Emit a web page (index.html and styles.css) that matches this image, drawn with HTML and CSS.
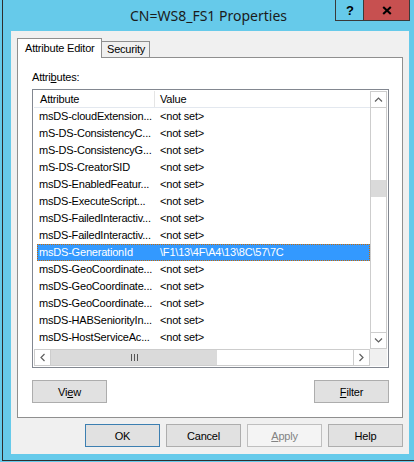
FILE: index.html
```html
<!DOCTYPE html>
<html>
<head>
<meta charset="utf-8">
<title>CN=WS8_FS1 Properties</title>
<link rel="stylesheet" href="styles.css">
</head>
<body>
<div class="window">
  <div class="titlebar">
    <div class="title">CN=WS8_FS1 Properties</div>
    <div class="caption">
      <div class="cap-help">?</div>
      <div class="cap-close">
        <svg width="10" height="9" viewBox="0 0 10 9"><path d="M1.2 1 L8.8 8 M8.8 1 L1.2 8" stroke="#000" stroke-width="2.1" fill="none"/></svg>
      </div>
    </div>
  </div>
  <div class="client">
    <div class="tabs">
      <div class="tab tab-active">Attribute Editor</div>
      <div class="tab tab-inactive">Security</div>
    </div>
    <div class="panel">
      <div class="label">Attri<u>b</u>utes:</div>
      <div class="listbox">
        <div class="rows">
          <div class="header"><div class="h-attr">Attribute</div><div class="h-val">Value</div></div>
          <div class="row"><span class="c1">msDS-cloudExtension...</span><span class="c2">&lt;not set&gt;</span></div>
          <div class="row"><span class="c1">mS-DS-ConsistencyC...</span><span class="c2">&lt;not set&gt;</span></div>
          <div class="row"><span class="c1">mS-DS-ConsistencyG...</span><span class="c2">&lt;not set&gt;</span></div>
          <div class="row"><span class="c1">mS-DS-CreatorSID</span><span class="c2">&lt;not set&gt;</span></div>
          <div class="row"><span class="c1">msDS-EnabledFeatur...</span><span class="c2">&lt;not set&gt;</span></div>
          <div class="row"><span class="c1">msDS-ExecuteScript...</span><span class="c2">&lt;not set&gt;</span></div>
          <div class="row"><span class="c1">msDS-FailedInteractiv...</span><span class="c2">&lt;not set&gt;</span></div>
          <div class="row"><span class="c1">msDS-FailedInteractiv...</span><span class="c2">&lt;not set&gt;</span></div>
          <div class="row sel"><span class="c1">msDS-GenerationId</span><span class="c2">\F1\13\4F\A4\13\8C\57\7C</span></div>
          <div class="row"><span class="c1">msDS-GeoCoordinate...</span><span class="c2">&lt;not set&gt;</span></div>
          <div class="row"><span class="c1">msDS-GeoCoordinate...</span><span class="c2">&lt;not set&gt;</span></div>
          <div class="row"><span class="c1">msDS-GeoCoordinate...</span><span class="c2">&lt;not set&gt;</span></div>
          <div class="row"><span class="c1">msDS-HABSeniorityIn...</span><span class="c2">&lt;not set&gt;</span></div>
          <div class="row"><span class="c1">msDS-HostServiceAc...</span><span class="c2">&lt;not set&gt;</span></div>
        </div>
        <div class="vscroll">
          <div class="sb-btn sb-up"><svg width="9" height="5" viewBox="0 0 9 5"><polyline points="1,4.5 4.5,1 8,4.5" stroke="#606060" stroke-width="1.2" fill="none"/></svg></div>
          <div class="vtrack"><div class="vthumb"></div></div>
          <div class="sb-btn sb-down"><svg width="9" height="5" viewBox="0 0 9 5"><polyline points="1,0.5 4.5,4 8,0.5" stroke="#606060" stroke-width="1.2" fill="none"/></svg></div>
        </div>
        <div class="hscroll">
          <div class="sb-hbtn sb-left"><svg width="5" height="9" viewBox="0 0 5 9"><polyline points="4.5,1 1,4.5 4.5,8" stroke="#606060" stroke-width="1.2" fill="none"/></svg></div>
          <div class="htrack">
            <div class="hthumb"><svg width="7" height="7" viewBox="0 0 7 7"><rect x="0" y="0" width="1" height="7" fill="#555"/><rect x="3" y="0" width="1" height="7" fill="#555"/><rect x="6" y="0" width="1" height="7" fill="#555"/></svg></div>
          </div>
          <div class="sb-hbtn sb-right"><svg width="5" height="9" viewBox="0 0 5 9"><polyline points="0.5,1 4,4.5 0.5,8" stroke="#606060" stroke-width="1.2" fill="none"/></svg></div>
        </div>
        <div class="corner"></div>
      </div>
      <div class="panel-buttons">
        <button class="btn">Vi<u>e</u>w</button>
        <button class="btn"><u>F</u>ilter</button>
      </div>
    </div>
    <div class="dialog-buttons">
      <button class="btn btn-default">OK</button>
      <button class="btn">Cancel</button>
      <button class="btn btn-disabled"><u>A</u>pply</button>
      <button class="btn">Help</button>
    </div>
  </div>
</div>
</body>
</html>
```

FILE: styles.css
```css
* { box-sizing: border-box; }
html, body { margin: 0; padding: 0; }
body {
  width: 414px;
  height: 462px;
  overflow: hidden;
  background: #66caea;
  font-family: "Liberation Sans", Arial, sans-serif;
  font-size: 11px;
  letter-spacing: -0.2px;
  color: #000;
}
.window {
  margin-left: 2px;
  height: 461px;
  border-left: 1px solid #2e2e2e;
  border-bottom: 1px solid #2e2e2e;
  display: flex;
  flex-direction: column;
}
.titlebar {
  height: 31px;
  display: flex;
  align-items: flex-start;
  flex-shrink: 0;
}
.title {
  flex: 1;
  padding-left: 79px;
  text-align: center;
  font-family: "Noto Sans", sans-serif;
  font-size: 14px;
  letter-spacing: 0;
  line-height: 31px;
  color: #1b1b1b;
  white-space: nowrap;
}
.caption {
  display: flex;
  margin-right: 4px;
  height: 21px;
  border: 1px solid #3a3a3a;
  border-top: none;
}
.cap-help {
  width: 28px;
  height: 20px;
  border-right: 1px solid #3a3a3a;
  display: flex;
  align-items: center;
  justify-content: center;
  font-weight: bold;
  font-size: 13px;
  letter-spacing: 0;
  padding-left: 1px;
}
.cap-close {
  width: 45px;
  height: 20px;
  background: #c75050;
  display: flex;
  align-items: center;
  justify-content: center;
}
.cap-close svg { display: block; margin-top: 1px; }
.client {
  margin-left: 8px;
  width: 398px;
  height: 423px;
  background: #f0f0f0;
  padding-top: 7px;
  display: flex;
  flex-direction: column;
  flex-shrink: 0;
}
.tabs {
  display: flex;
  align-items: flex-end;
  margin-left: 6px;
  height: 19px;
  flex-shrink: 0;
}
.tab { white-space: nowrap; }
.tab-active {
  width: 85px;
  height: 20px;
  margin-bottom: -1px;
  border: 1px solid #8f8f8f;
  border-bottom: none;
  background: #fff;
  position: relative;
  z-index: 1;
  padding-left: 7px;
  line-height: 19px;
}
.tab-inactive {
  width: 48px;
  height: 16px;
  border-top: 1px solid #8f8f8f;
  border-right: 1px solid #8f8f8f;
  background: #f0f0f0;
  padding-left: 5px;
  line-height: 15px;
}
.panel {
  margin-left: 6px;
  width: 386px;
  height: 361px;
  border: 1px solid #8f8f8f;
  background: #fff;
  padding: 13px 13px 14px 14px;
  display: flex;
  flex-direction: column;
  flex-shrink: 0;
}
.label {
  height: 13px;
  line-height: 13px;
  margin-bottom: 5px;
}
.listbox {
  width: 357px;
  height: 279px;
  border: 1px solid #828790;
  padding: 1px;
  display: grid;
  grid-template-columns: 336px 17px;
  grid-template-rows: 258px 17px;
  flex-shrink: 0;
}
.rows { overflow: hidden; }
.header {
  display: flex;
  height: 17px;
  border-bottom: 1px solid #e3e8ef;
  line-height: 16px;
}
.h-attr {
  width: 121px;
  padding-left: 6px;
  border-right: 1px solid #e5e5e5;
}
.h-val { padding-left: 5px; }
.row {
  height: 17px;
  width: 333px;
  margin-left: 3px;
  display: grid;
  grid-template-columns: 123px 1fr;
  line-height: 17px;
  white-space: nowrap;
  overflow: hidden;
}
.c1 { padding-left: 2px; overflow: hidden; }
.row.sel {
  background: #3399ff;
  color: #fff;
  outline: 1px dotted #cc6a00;
  outline-offset: -1px;
}
.vscroll {
  border: 1px solid #cdcdcd;
  background: #fff;
  display: flex;
  flex-direction: column;
}
.sb-btn {
  height: 16px;
  display: flex;
  align-items: center;
  justify-content: center;
  flex-shrink: 0;
}
.sb-btn svg, .sb-hbtn svg, .hthumb svg { display: block; }
.sb-up { border-bottom: 1px solid #cdcdcd; }
.sb-down { border-top: 1px solid #cdcdcd; }
.vtrack { flex: 1; padding-top: 72px; }
.vthumb { height: 17px; background: #dadada; }
.hscroll {
  border: 1px solid #cdcdcd;
  background: #fff;
  display: flex;
}
.sb-hbtn {
  width: 16px;
  display: flex;
  align-items: center;
  justify-content: center;
  flex-shrink: 0;
}
.sb-left { border-right: 1px solid #cdcdcd; }
.sb-right { border-left: 1px solid #cdcdcd; }
.htrack { flex: 1; display: flex; }
.hthumb {
  width: 166px;
  background: #dadada;
  display: flex;
  align-items: center;
  justify-content: center;
}
.corner { background: #f0f0f0; }
.panel-buttons {
  display: flex;
  justify-content: space-between;
  margin-top: 12px;
}
.btn {
  width: 75px;
  height: 23px;
  border: 1px solid #adadad;
  background: #e1e1e1;
  font-family: "Liberation Sans", Arial, sans-serif;
  font-size: 11px;
  letter-spacing: -0.2px;
  color: #000;
  padding: 0;
  margin: 0;
  border-radius: 0;
}
.btn u { text-underline-offset: 1px; }
.btn-default { border-color: #3c7fb1; }
.btn-disabled {
  background: #f4f4f4;
  border-color: #bfbfbf;
  color: #838383;
}
.dialog-buttons {
  display: flex;
  justify-content: flex-end;
  gap: 6px;
  margin-top: 6px;
  margin-right: 6px;
}
```
